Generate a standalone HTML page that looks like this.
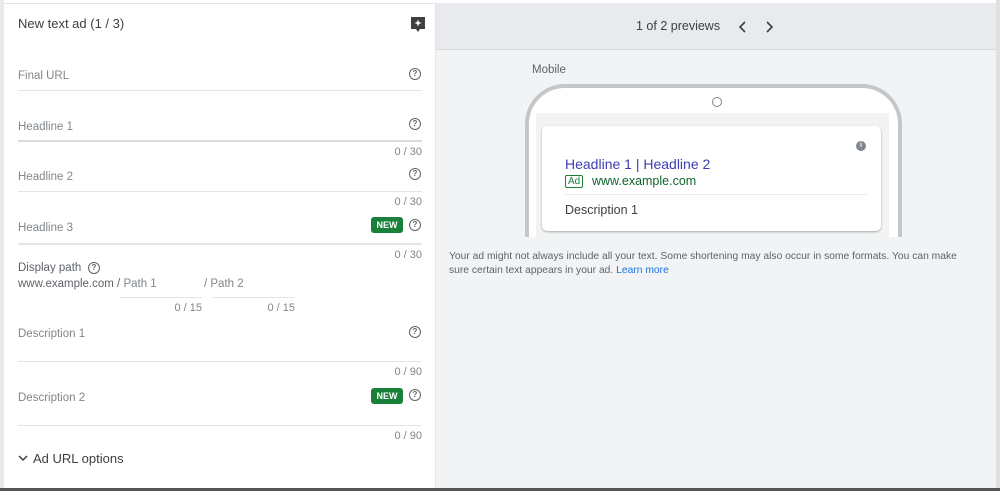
<!DOCTYPE html>
<html><head><style>
*{margin:0;padding:0;box-sizing:border-box}
body{width:1000px;height:491px;position:relative;overflow:hidden;background:#fff;font-family:"Liberation Sans",Arial,sans-serif}
.a{position:absolute}
.lbl{font-size:11.5px;color:#80868b}
.cnt{font-size:11px;color:#80868b;text-align:right}
.ln{height:1px;background:#e3e5e8}
.q{width:12px;height:12px;border:1.3px solid #5f6368;border-radius:50%;font-size:8px;line-height:10px;text-align:center;color:#5f6368;font-weight:bold}
.new{background:#188038;color:#fff;font-size:9px;font-weight:bold;border-radius:3px;width:32px;height:16px;line-height:16px;text-align:center}
</style></head><body>
<div class="a" style="left:0;top:0;width:4px;height:491px;background:#e8eaed"></div>
<div class="a" style="left:4px;top:3px;width:432px;height:1px;background:#e3e5e8"></div>
<div class="a" style="left:18px;top:16px;font-size:13px;color:#3c4043">New text ad (1 / 3)</div>
<svg class="a" style="left:410px;top:16px" width="16" height="17" viewBox="0 0 16 17"><path d="M1 1h14v12h-5l-2 3-2-3H1z" fill="#3c4043"/><path d="M8 3.5l1 2.5 2.5 1-2.5 1-1 2.5-1-2.5-2.5-1 2.5-1z" fill="#fff"/></svg>

<div class="a lbl" style="left:18px;top:70px">Final URL</div>
<div class="a q" style="left:409px;top:68px">?</div>
<div class="a ln" style="left:18px;top:90px;width:404px"></div>

<div class="a lbl" style="left:18px;top:121px">Headline 1</div>
<div class="a q" style="left:409px;top:118px">?</div>
<div class="a" style="left:18px;top:140px;width:404px;height:2px;background:#dadce0"></div>
<div class="a cnt" style="left:322px;top:146px;width:100px">0 / 30</div>

<div class="a lbl" style="left:18px;top:171px">Headline 2</div>
<div class="a q" style="left:409px;top:168px">?</div>
<div class="a ln" style="left:18px;top:191px;width:404px"></div>
<div class="a cnt" style="left:322px;top:196px;width:100px">0 / 30</div>

<div class="a lbl" style="left:18px;top:222px">Headline 3</div>
<div class="a new" style="left:371px;top:217px">NEW</div>
<div class="a q" style="left:409px;top:219px">?</div>
<div class="a" style="left:18px;top:243px;width:404px;height:2px;background:#e3e5e8"></div>
<div class="a cnt" style="left:322px;top:249px;width:100px">0 / 30</div>

<div class="a" style="left:18px;top:262px;font-size:11.5px;color:#5f6368">Display path</div>
<div class="a q" style="left:88px;top:262px">?</div>
<div class="a" style="left:18px;top:278px;font-size:11.5px;color:#5f6368">www.example.com / <span style="color:#80868b">Path 1</span></div>
<div class="a" style="left:204px;top:278px;font-size:11.5px;color:#80868b">/ Path 2</div>
<div class="a ln" style="left:119px;top:297px;width:83px"></div>
<div class="a ln" style="left:212px;top:297px;width:83px"></div>
<div class="a cnt" style="left:152px;top:302px;width:50px">0 / 15</div>
<div class="a cnt" style="left:245px;top:302px;width:50px">0 / 15</div>

<div class="a lbl" style="left:18px;top:328px">Description 1</div>
<div class="a q" style="left:409px;top:326px">?</div>
<div class="a ln" style="left:18px;top:361px;width:404px"></div>
<div class="a cnt" style="left:322px;top:366px;width:100px">0 / 90</div>

<div class="a lbl" style="left:18px;top:392px">Description 2</div>
<div class="a new" style="left:371px;top:388px">NEW</div>
<div class="a q" style="left:409px;top:389px">?</div>
<div class="a ln" style="left:18px;top:425px;width:404px"></div>
<div class="a cnt" style="left:322px;top:430px;width:100px">0 / 90</div>

<svg class="a" style="left:18px;top:454px" width="10" height="8" viewBox="0 0 10 8"><path d="M1 2l4 4 4-4" stroke="#3c4043" stroke-width="1.5" fill="none"/></svg>
<div class="a" style="left:33px;top:451px;font-size:13px;color:#3c4043">Ad URL options</div>

<div class="a" style="left:435px;top:3px;width:561px;height:485px;background:#f1f3f4;border-left:1px solid #e3e5e8"></div>
<div class="a" style="left:436px;top:3px;width:560px;height:47px;background:#e8eaed;border-bottom:1px solid #dadce0"></div>
<div class="a" style="left:996px;top:0;width:4px;height:491px;background:#e0e0e0"></div>
<div class="a" style="left:0;top:488px;width:1000px;height:3px;background:#555"></div>
<div class="a" style="left:636px;top:19px;font-size:12.5px;color:#3c4043">1 of 2 previews</div>
<svg class="a" style="left:738px;top:21px" width="10" height="12" viewBox="0 0 10 12"><path d="M7 1L2 6l5 5" stroke="#3c4043" stroke-width="1.6" fill="none"/></svg>
<svg class="a" style="left:764px;top:21px" width="10" height="12" viewBox="0 0 10 12"><path d="M3 1l5 5-5 5" stroke="#3c4043" stroke-width="1.6" fill="none"/></svg>

<div class="a" style="left:532px;top:64px;font-size:11.5px;color:#5f6368">Mobile</div>
<div class="a" style="left:525px;top:84px;width:377px;height:200px;border:4px solid #c4c7ca;border-radius:40px;background:#fff"></div>
<div class="a" style="left:712px;top:97px;width:10px;height:10px;border:1px solid #80868b;border-radius:50%"></div>
<div class="a" style="left:536px;top:113px;width:353px;height:130px;background:#f1f3f4"></div>
<div class="a" style="left:542px;top:126px;width:339px;height:105px;background:#fff;border-radius:5px;box-shadow:0 1px 2px rgba(0,0,0,.3)"></div>
<div class="a" style="left:856px;top:141px;width:10px;height:10px;border-radius:50%;background:#80868b;color:#fff;font-size:7px;line-height:10px;text-align:center;font-weight:bold">i</div>
<div class="a" style="left:565px;top:156px;font-size:14px;color:#3c3cb4">Headline 1 | Headline 2</div>
<div class="a" style="left:565px;top:175px;font-size:10px;color:#188038;border:1px solid #188038;border-radius:2px;padding:0 2px;line-height:11px">Ad</div>
<div class="a" style="left:592px;top:174px;font-size:12.5px;color:#0d652d">www.example.com</div>
<div class="a ln" style="left:565px;top:194px;width:302px;background:#ebebeb"></div>
<div class="a" style="left:565px;top:203px;font-size:12.5px;color:#3c4043">Description 1</div>
<div class="a" style="left:436px;top:237px;width:560px;height:250px;background:#f1f3f4"></div>
<div class="a" style="left:449px;top:250px;width:530px;font-size:10.3px;line-height:14px;color:#5f6368">Your ad might not always include all your text. Some shortening may also occur in some formats. You can make sure certain text appears in your ad. <span style="color:#1a73e8">Learn more</span></div>
</body></html>
